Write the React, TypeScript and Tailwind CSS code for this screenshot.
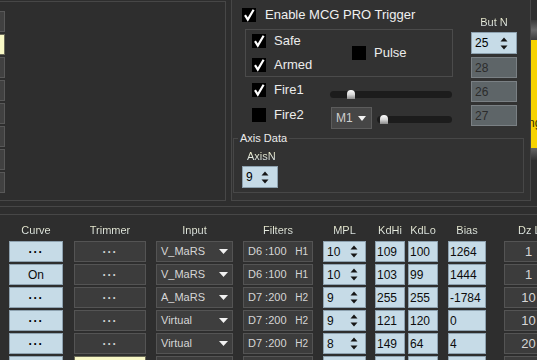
import React from "react";

const hdr =
  "bg-linear-to-b from-[#f7f3c4] to-[#d6e3f3] bg-clip-text text-transparent";

const Check = ({ checked }: { checked: boolean }) => (
  <div className="w-[14px] h-[14px] bg-black shrink-0 flex items-center justify-center">
    {checked && (
      <svg width="14" height="14" viewBox="0 0 14 14">
        <path
          d="M3 7.2 L5.8 11.6 L11.6 1.8"
          stroke="#ffffff"
          strokeWidth="2.2"
          fill="none"
          strokeLinejoin="miter"
        />
      </svg>
    )}
  </div>
);

const Labeled = ({ checked, text }: { checked: boolean; text: string }) => (
  <div className="flex items-center gap-[8px]">
    <Check checked={checked} />
    <span className="text-[13px] leading-[14px] text-[#ececec] whitespace-nowrap">{text}</span>
  </div>
);

const SpinArrows = () => (
  <svg width="8" height="13" viewBox="0 0 8 13" className="shrink-0">
    <path d="M0.5 4.5 L4 0.5 L7.5 4.5 Z" fill="#151515" />
    <path d="M0.5 8.5 L7.5 8.5 L4 12.5 Z" fill="#151515" />
  </svg>
);

const DownTri = ({ w = 9 }: { w?: number }) => (
  <svg width={w} height="5" viewBox={`0 0 ${w} 5`} className="shrink-0">
    <path d={`M0 0 L${w} 0 L${w / 2} 5 Z`} fill="#f2f2f2" />
  </svg>
);

const Slider = ({ w, thumb }: { w: number; thumb: number }) => (
  <div className="relative h-[7px] rounded-full bg-[#1c1c1c]" style={{ width: w }}>
    <div
      className="absolute top-[-1px] w-[8px] h-[9px] rounded-t-full rounded-b-[2px] bg-linear-to-b from-[#ffffff] via-[#d8d8d8] to-[#8a8a8a]"
      style={{ left: thumb }}
    />
  </div>
);

const blue =
  "bg-[#c6dbe7] border border-[#8ea2b0] flex items-center text-[12px] text-[#0c0c0c] shrink-0";
const dark =
  "bg-[#3c3c3c] border border-[#545454] flex items-center text-[#d6d6d6] shrink-0";

type R = {
  curve: string;
  input: string;
  filt: string;
  h: string;
  mpl: string;
  hi: string;
  lo: string;
  bias: string;
  dz: string;
};

const rows: R[] = [
  { curve: "···", input: "V_MaRS", filt: "D6 :100", h: "H1", mpl: "10", hi: "109", lo: "100", bias: "1264", dz: "1" },
  { curve: "On", input: "V_MaRS", filt: "D6 :100", h: "H1", mpl: "10", hi: "103", lo: "99", bias: "1444", dz: "1" },
  { curve: "···", input: "A_MaRS", filt: "D7 :200", h: "H2", mpl: "9", hi: "255", lo: "255", bias: "-1784", dz: "10" },
  { curve: "···", input: "Virtual", filt: "D7 :200", h: "H2", mpl: "9", hi: "121", lo: "120", bias: "0", dz: "10" },
  { curve: "···", input: "Virtual", filt: "D7 :200", h: "H2", mpl: "8", hi: "149", lo: "64", bias: "4", dz: "20" },
];

const Row = ({ r }: { r: R }) => (
  <div className="flex h-[21px] shrink-0">
    <div className="w-[9px] shrink-0" />
    <div className={`w-[54px] justify-center ${blue}`}>
      <span className={r.curve === "On" ? "" : "font-bold tracking-[1px] text-black"}>{r.curve}</span>
    </div>
    <div className={`ml-[11px] w-[72px] justify-center text-[12px] ${dark}`}>
      <span className="font-bold tracking-[1px] text-[#d0d0d0]">···</span>
    </div>
    <div className={`ml-[10px] w-[77px] pl-[4px] pr-[4px] text-[11px] border-[#5a5a5a] bg-[#3e3e3e] ${dark}`}>
      <span>{r.input}</span>
      <span className="ml-auto">
        <DownTri w={9} />
      </span>
    </div>
    <div className={`ml-[10px] w-[70px] pl-[4px] pr-[4px] text-[#cfd8e2] ${dark}`}>
      <span className="text-[11px]">{r.filt}</span>
      <span className="ml-auto text-[10px]">{r.h}</span>
    </div>
    <div className={`ml-[10px] w-[43px] pl-[3px] pr-[7px] ${blue}`}>
      <span>{r.mpl}</span>
      <span className="ml-auto flex">
        <SpinArrows />
      </span>
    </div>
    <div className={`ml-[9px] w-[30px] pl-[1px] ${blue}`}>{r.hi}</div>
    <div className={`ml-[3px] w-[30px] pl-[1px] ${blue}`}>{r.lo}</div>
    <div className={`ml-[10px] w-[38px] pl-[1px] ${blue}`}>{r.bias}</div>
    <div className={`ml-[18px] w-[49px] justify-center text-[13px] ${dark}`}>{r.dz}</div>
  </div>
);

const LastRow = () => (
  <div className="flex h-[21px] shrink-0">
    <div className="w-[9px] shrink-0" />
    <div className={`w-[54px] ${blue}`} />
    <div className="ml-[11px] w-[72px] bg-[#f8f8c6] border border-[#6b6b58] shrink-0" />
    <div className={`ml-[10px] w-[77px] ${dark}`} />
    <div className={`ml-[10px] w-[70px] ${dark}`} />
    <div className={`ml-[10px] w-[43px] ${blue}`} />
    <div className={`ml-[9px] w-[30px] ${blue}`} />
    <div className={`ml-[3px] w-[30px] ${blue}`} />
    <div className={`ml-[10px] w-[38px] ${blue}`} />
    <div className={`ml-[18px] w-[49px] ${dark}`} />
  </div>
);

const Spin = ({ v, w }: { v: string; w: string }) => (
  <div className={`${w} h-[22px] bg-[#c6dbe7] border border-[#8ea2b0] flex items-center pl-[3px] pr-[8px] text-[12px] text-black`}>
    <span>{v}</span>
    <span className="ml-auto flex">
      <SpinArrows />
    </span>
  </div>
);

const GraySpin = ({ v }: { v: string }) => (
  <div className="w-[46px] h-[21px] bg-[#5e6568] border border-[#7a8084] flex items-center pl-[3px] text-[12px] text-[#2c2c2c]">
    {v}
  </div>
);

export default function App() {
  const btns = [false, true, false, false, false, false, false, false];
  return (
    <div className="w-[537px] h-[360px] overflow-hidden bg-[#2e2e2e] font-['Liberation_Sans',Arial,sans-serif] text-[#e6e6e6] select-none">
      {/* top area */}
      <div className="flex h-[201px]">
        {/* left panel */}
        <div className="mt-[1px] w-[226px] h-[200px] border-t border-r border-b border-[#474747] shrink-0">
          <div className="flex flex-col gap-[2px] pt-[9px]">
            {btns.map((y, i) => (
              <div
                key={i}
                className={
                  y
                    ? "w-[5px] h-[21px] bg-[#f9f9c6] border border-l-0 border-[#6a6a5a]"
                    : "w-[5px] h-[21px] bg-[#414141] border border-l-0 border-[#585858]"
                }
              />
            ))}
          </div>
        </div>

        {/* right panel */}
        <div className="ml-[5px] w-[300px] h-[201px] border-l border-r border-b border-[#474747] bg-[#323232] shrink-0 flex flex-col">
          <div className="flex h-[132px] shrink-0">
            <div className="ml-[10px] w-[211px] flex flex-col shrink-0">
              <div className="mt-[8px] h-[14px] flex items-center gap-[9px]">
                <Check checked />
                <span className="text-[13px] leading-[14px] text-[#f0f0f0] whitespace-nowrap">
                  Enable MCG PRO Trigger
                </span>
              </div>
              <div className="mt-[7px] ml-[3px] w-[208px] h-[48px] border border-[#4b4b4b] flex items-center">
                <div className="ml-[6px] w-[100px] flex flex-col gap-[10px]">
                  <Labeled checked text="Safe" />
                  <Labeled checked text="Armed" />
                </div>
                <Labeled checked={false} text="Pulse" />
              </div>
              <div className="mt-[6px] h-[24px] flex items-start">
                <div className="ml-[10px] w-[78px]">
                  <Labeled checked text="Fire1" />
                </div>
                <div className="mt-[8px]">
                  <Slider w={122} thumb={17} />
                </div>
              </div>
              <div className="h-[22px] flex items-start">
                <div className="ml-[10px] w-[79px] mt-[1px]">
                  <Labeled checked={false} text="Fire2" />
                </div>
                <div className="w-[41px] h-[22px] bg-[#464646] border border-[#5c5c5c] flex items-center pl-[4px] pr-[5px] text-[12px] text-[#cfcfcf]">
                  <span>M1</span>
                  <span className="ml-auto flex">
                    <DownTri w={8} />
                  </span>
                </div>
                <div className="ml-[5px] mt-[9px]">
                  <Slider w={75} thumb={3} />
                </div>
              </div>
            </div>
            <div className="ml-[18px] w-[46px] flex flex-col shrink-0">
              <div className={`mt-[15px] h-[14px] leading-[14px] text-[11px] text-center ${hdr}`}>But N</div>
              <div className="mt-[3px] flex flex-col gap-[3px]">
                <Spin v="25" w="w-[46px]" />
                <GraySpin v="28" />
                <GraySpin v="26" />
                <GraySpin v="27" />
              </div>
            </div>
          </div>
          <fieldset className="ml-[1px] w-[291px] h-[61px] border border-[#474747] shrink-0">
            <legend className="ml-[4px] px-[2px] text-[11px] leading-[13px] text-[#ececec]">Axis Data</legend>
            <div className={`ml-[13px] mt-[5px] h-[13px] leading-[13px] text-[11px] w-fit ${hdr}`}>AxisN</div>
            <div className="ml-[8px] mt-[3px]">
              <Spin v="9" w="w-[36px]" />
            </div>
          </fieldset>
        </div>

        {/* right strip */}
        <div className="w-[6px] h-[201px] flex flex-col shrink-0 overflow-hidden">
          <div className="h-[20px] shrink-0" />
          <div className="h-[20px] shrink-0 bg-linear-to-b from-[#3a3a3a] via-[#6a6a6a] to-[#3c3c3c]" />
          <div className="h-[108px] shrink-0 bg-[#f7d300] overflow-hidden">
            <div className="pt-[74px] -ml-[3px] text-[12px] text-[#3a3000] whitespace-nowrap">ng</div>
          </div>
          <div className="h-[12px] shrink-0 bg-linear-to-b from-[#666666] to-[#333333]" />
        </div>
      </div>

      {/* separator strip */}
      <div className="mt-[5px] h-[9px] border-t border-b border-[#474747]" />

      {/* table header */}
      <div className="flex h-[26px] pt-[4px] items-center text-[11px] whitespace-nowrap">
        <div className="w-[9px] shrink-0 overflow-hidden">
          <span className={`block -ml-[6px] ${hdr}`}>t:</span>
        </div>
        <div className={`w-[54px] shrink-0 text-center ${hdr}`}>Curve</div>
        <div className={`ml-[11px] w-[72px] shrink-0 text-center ${hdr}`}>Trimmer</div>
        <div className={`ml-[10px] w-[77px] shrink-0 text-center ${hdr}`}>Input</div>
        <div className={`ml-[10px] w-[70px] shrink-0 text-center ${hdr}`}>Filters</div>
        <div className={`ml-[10px] w-[43px] shrink-0 text-center ${hdr}`}>MPL</div>
        <div className={`ml-[9px] w-[30px] shrink-0 text-center ${hdr}`}>KdHi</div>
        <div className={`ml-[3px] w-[30px] shrink-0 text-center ${hdr}`}>KdLo</div>
        <div className={`ml-[10px] w-[38px] shrink-0 text-center ${hdr}`}>Bias</div>
        <div className={`ml-[18px] w-[49px] shrink-0 pl-[14px] ${hdr}`}>Dz Lo</div>
      </div>

      {/* table rows */}
      <div className="flex flex-col gap-[2px]">
        {rows.map((r, i) => (
          <Row key={i} r={r} />
        ))}
        <LastRow />
      </div>
    </div>
  );
}
